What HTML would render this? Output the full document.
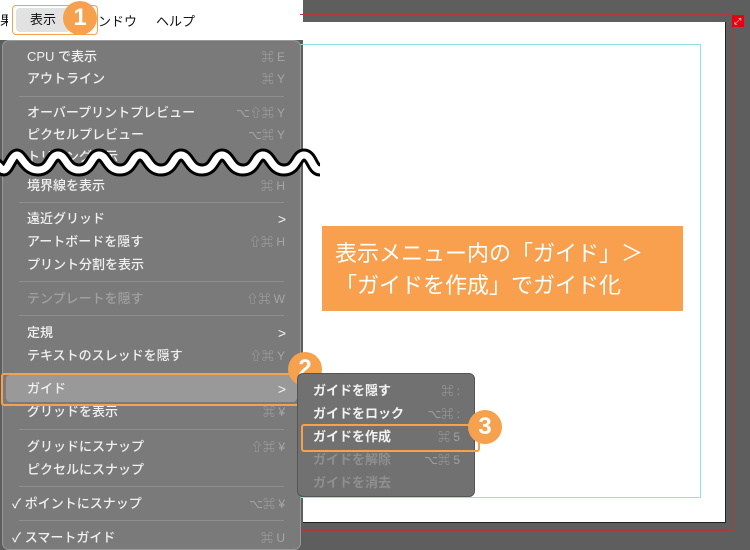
<!DOCTYPE html>
<html><head><meta charset="utf-8"><style>
*{margin:0;padding:0;box-sizing:border-box}
body{width:750px;height:540px;overflow:hidden;background:#5e5e5e;position:relative;font-family:"Liberation Sans","Noto Sans CJK JP",sans-serif}
.a{position:absolute}
.it{position:absolute;left:24px;font-size:13px;color:#f0f0f0;font-weight:500;line-height:16px;white-space:nowrap}
.sc{position:absolute;right:15px;font-size:12px;color:#a6a6a6;line-height:16px;white-space:nowrap}
.dis{color:#a0a0a0}
.sep{position:absolute;left:16px;right:16px;height:1px;background:#8e8e8e}
.ar{position:absolute;right:14px;color:#f2f2f2;font-size:14px;line-height:16px}
.badge{position:absolute;width:34px;height:34px;border-radius:50%;background:#f6a14d;color:#fff;font-size:24px;font-weight:bold;text-align:center;line-height:34px}
.si{position:absolute;left:15px;font-size:13px;font-weight:bold;color:#f2f2f2;line-height:16px;white-space:nowrap}
.ss{position:absolute;right:14px;font-size:12px;color:#a0a0a0;line-height:16px}
</style></head><body>
<div class="a" style="left:0;top:0;width:303px;height:40px;background:#fff"></div>
<div class="a" style="left:300px;top:14px;width:433px;height:1px;background:#b03a3a"></div>
<div class="a" style="left:732px;top:14px;width:1px;height:517px;background:#b03a3a"></div>
<div class="a" style="left:300px;top:530px;width:433px;height:1px;background:#b03a3a"></div>
<div class="a" style="left:303px;top:22px;width:423px;height:501px;background:#fff;border-right:1px solid #222;border-bottom:1px solid #222"></div>
<div class="a" style="left:732px;top:15px;width:12px;height:12px;background:#e8000f"></div>
<div class="a" style="left:734px;top:17px;color:#fff;font-size:9px;line-height:8px">⤢</div>
<div class="a" style="left:290px;top:44px;width:411px;height:454px;border:1px solid #8fe3e3;border-left:none"></div>
<div class="a" style="left:0;top:10px;font-size:13px;color:#111;width:8px;overflow:hidden">果</div>
<div class="a" style="left:12px;top:5px;width:86px;height:30px;border:1.5px solid #f6a14d;border-radius:4px"></div>
<div class="a" style="left:16px;top:8px;width:54px;height:24px;background:#e2e2e2;border-radius:4px;font-size:13px;line-height:24px;text-align:center;color:#111">表示</div>
<div class="a" style="left:98px;top:11px;font-size:13px;color:#111">ンドウ</div>
<div class="a" style="left:156px;top:11px;font-size:13px;color:#111">ヘルプ</div>
<div class="badge" style="left:63px;top:1px">1</div>
<div class="a" style="left:2px;top:40px;width:299px;height:510px;background:#7a7a7a;border-radius:7px;border:1px solid #999">
<div class="it" style="top:8px">CPU で表示</div><div class="sc" style="top:8px">⌘ E</div>
<div class="it" style="top:30px">アウトライン</div><div class="sc" style="top:30px">⌘ Y</div>
<div class="sep" style="top:55px"></div>
<div class="it" style="top:64px">オーバープリントプレビュー</div><div class="sc" style="top:64px">⌥⇧⌘ Y</div>
<div class="it" style="top:86px">ピクセルプレビュー</div><div class="sc" style="top:86px">⌥⌘ Y</div>
<div class="it" style="top:108px">トリミング表示</div>
<div class="it" style="top:137px">境界線を表示</div><div class="sc" style="top:137px">⌘ H</div>
<div class="sep" style="top:161px"></div>
<div class="it" style="top:170px">遠近グリッド</div><div class="ar" style="top:170px">&gt;</div>
<div class="it" style="top:193px">アートボードを隠す</div><div class="sc" style="top:193px">⇧⌘ H</div>
<div class="it" style="top:216px">プリント分割を表示</div>
<div class="sep" style="top:240px"></div>
<div class="it dis" style="top:250px">テンプレートを隠す</div><div class="sc" style="top:250px">⇧⌘ W</div>
<div class="sep" style="top:274px"></div>
<div class="it" style="top:284px">定規</div><div class="ar" style="top:284px">&gt;</div>
<div class="it" style="top:307px">テキストのスレッドを隠す</div><div class="sc" style="top:307px">⇧⌘ Y</div>
<div class="a" style="left:3px;top:334px;width:291px;height:27px;background:#999;border-radius:4px"></div>
<div class="it" style="top:340px">ガイド</div><div class="ar" style="top:340px">&gt;</div>
<div class="it" style="top:363px">グリッドを表示</div><div class="sc" style="top:363px">⌘ ¥</div>
<div class="sep" style="top:388px"></div>
<div class="it" style="top:398px">グリッドにスナップ</div><div class="sc" style="top:398px">⇧⌘ ¥</div>
<div class="it" style="top:421px">ピクセルにスナップ</div>
<div class="sep" style="top:445px"></div>
<div class="it" style="top:455px;left:9px">✓ ポイントにスナップ</div><div class="sc" style="top:455px">⌥⌘ ¥</div>
<div class="sep" style="top:479px"></div>
<div class="it" style="top:489px;left:9px">✓ スマートガイド</div><div class="sc" style="top:489px">⌘ U</div>
</div>
<svg class="a" style="left:0;top:140px" width="330" height="45">
<path d="M-10 23 C0 23 0 30 4 30 S12 15 17 15 S25 30 38 30 S50 15 58 15 S66 30 79 30 S91 15 99 15 S107 30 120 30 S132 15 140 15 S148 30 161 30 S173 15 181 15 S189 30 202 30 S214 15 222 15 S230 30 243 30 S255 15 263 15 S271 30 284 30 S296 15 304 15 S312 30 320 30" fill="none" stroke="#000" stroke-width="13"/>
<path d="M-10 23 C0 23 0 30 4 30 S12 15 17 15 S25 30 38 30 S50 15 58 15 S66 30 79 30 S91 15 99 15 S107 30 120 30 S132 15 140 15 S148 30 161 30 S173 15 181 15 S189 30 202 30 S214 15 222 15 S230 30 243 30 S255 15 263 15 S271 30 284 30 S296 15 304 15 S312 30 320 30" fill="none" stroke="#fff" stroke-width="7"/>
</svg>
<div class="a" style="left:1px;top:373px;width:302px;height:33px;border:2px solid #f6a14d;border-radius:3px"></div>
<div class="badge" style="left:288px;top:352px">2</div>
<div class="a" style="left:297px;top:373px;width:178px;height:124px;background:#717171;border-radius:6px;border:1px solid #555">
<div class="si" style="top:9px">ガイドを隠す</div><div class="ss" style="top:9px">⌘ :</div>
<div class="si" style="top:32px">ガイドをロック</div><div class="ss" style="top:32px">⌥⌘ :</div>
<div class="si" style="top:55px">ガイドを作成</div><div class="ss" style="top:55px">⌘ 5</div>
<div class="si" style="top:78px;color:#8f8f8f">ガイドを解除</div><div class="ss" style="top:78px">⌥⌘ 5</div>
<div class="si" style="top:101px;color:#8f8f8f">ガイドを消去</div>
</div>
<div class="a" style="left:301px;top:424px;width:179px;height:28px;border:2px solid #f6a14d;border-radius:3px"></div>
<div class="badge" style="left:468px;top:410px">3</div>
<div class="a" style="left:322px;top:226px;width:361px;height:85px;background:#f8a04d;color:#fff;font-size:22px;line-height:32px;padding:12px 0 0 13px;white-space:nowrap">表示メニュー内の「ガイド」＞<br>「ガイドを作成」でガイド化</div>
</body></html>
